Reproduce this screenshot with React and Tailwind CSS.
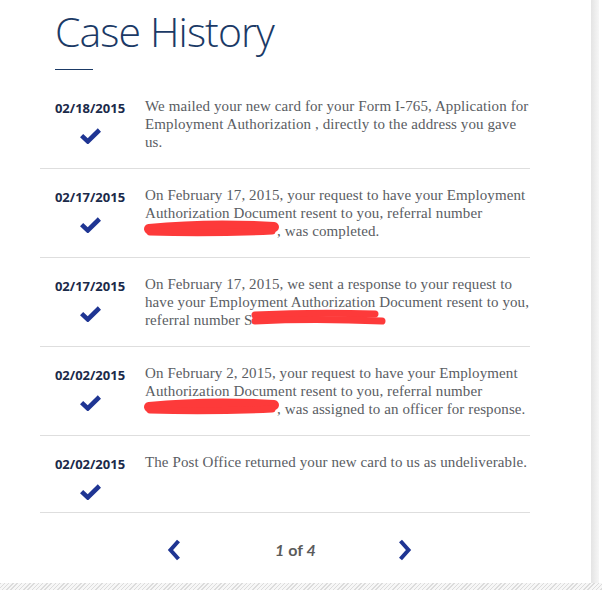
import React from "react";

const sans = { fontFamily: '"Open Sans", "Liberation Sans", sans-serif' };

function Check() {
  return (
    <svg width="21" height="17" viewBox="0 0 21 17" className="block">
      <path d="M1.6 8.6 L7.8 14.4 L19.4 3" fill="none" stroke="#1f3593" strokeWidth="4.6" strokeLinejoin="miter" strokeLinecap="butt" />
    </svg>
  );
}

function Redact({ w, second }) {
  return (
    <span className="relative inline-block align-baseline" style={{ width: w, height: 12 }}>
      <svg width={w + 8} height="22" viewBox={`0 0 ${w + 8} 22`} className="absolute left-[-3px] top-[-4px]">
        {second ? (
          <>
            <path d={`M6 6 Q ${w / 2} 3 ${w - 4} 5`} stroke="#fd3a3a" strokeWidth="7" strokeLinecap="round" fill="none" />
            <path d={`M6 12 Q ${w / 2} 9 ${w + 3} 12`} stroke="#fd3a3a" strokeWidth="7" strokeLinecap="round" fill="none" />
          </>
        ) : (
          <>
            <path d={`M7 9 Q ${w / 2} 3 ${w} 7`} stroke="#fd3a3a" strokeWidth="10" strokeLinecap="round" fill="none" />
            <path d={`M8 12 Q ${w / 2} 14 ${w - 2} 11`} stroke="#fd3a3a" strokeWidth="7" strokeLinecap="round" fill="none" />
          </>
        )}
      </svg>
    </span>
  );
}

function Row({ date, children }) {
  return (
    <div className="flex border-b border-[#dedede] pt-[19px] pb-[12px]">
      <div className="w-[100px] flex flex-col items-center shrink-0">
        <div className="text-[13px] leading-[18px] font-bold text-[#1b2a4a]" style={sans}>{date}</div>
        <div className="mt-[10px]"><Check /></div>
      </div>
      <div
        className="ml-[5px] -mt-[2px] mb-[5px] text-[15px] leading-[18px] tracking-[0.1px] text-[#5a5d63] whitespace-nowrap"
        style={{ fontFamily: '"Liberation Serif", serif' }}
      >
        {children}
      </div>
    </div>
  );
}

export default function App() {
  return (
    <div className="w-[602px] h-[590px] bg-white flex flex-col overflow-hidden">
      <div className="flex flex-1">
        <div className="w-[591px] pl-[40px] pt-[7px]">
          <div className="pl-[15px]">
            <h1 className="text-[41px] leading-[48px] font-light tracking-[-0.9px] text-[#1b3a66]" style={sans}>Case History</h1>
            <div className="w-[38px] h-[1px] bg-[#1b3a66] mt-[14px]" />
          </div>
          <div className="w-[490px] mt-[10px]">
            <Row date="02/18/2015">
              We mailed your new card for your Form I-765, Application for<br />
              Employment Authorization , directly to the address you gave<br />
              us.
            </Row>
            <Row date="02/17/2015">
              On February 17, 2015, your request to have your Employment<br />
              Authorization Document resent to you, referral number<br />
              <Redact w={132} />, was completed.
            </Row>
            <Row date="02/17/2015">
              On February 17, 2015, we sent a response to your request to<br />
              have your Employment Authorization Document resent to you,<br />
              referral number S<Redact w={130} second />
            </Row>
            <Row date="02/02/2015">
              On February 2, 2015, your request to have your Employment<br />
              Authorization Document resent to you, referral number<br />
              <Redact w={132} />, was assigned to an officer for response.
            </Row>
            <Row date="02/02/2015">
              The Post Office returned your new card to us as undeliverable.
            </Row>
          </div>
          <div className="flex items-center pt-[26px] pl-[127px]">
            <svg width="14" height="22" viewBox="0 0 14 22" className="block">
              <path d="M11.5 2 L3.5 11 L11.5 20" fill="none" stroke="#1f3593" strokeWidth="4" />
            </svg>
            <div
              className="ml-[94px] w-[38px] text-center whitespace-nowrap text-[16px] leading-[22px] font-bold text-[#5b5b5b]"
              style={{ fontFamily: 'Lato, "Open Sans", sans-serif' }}
            >
              <span className="italic">1</span> of <span className="italic">4</span>
            </div>
            <svg width="14" height="22" viewBox="0 0 14 22" className="block ml-[85px]">
              <path d="M2.5 2 L10.5 11 L2.5 20" fill="none" stroke="#1f3593" strokeWidth="4" />
            </svg>
          </div>
        </div>
        <div className="w-[8px] bg-gradient-to-r from-[#e4e4e4] to-[#f6f6f6]" />
        <div className="w-[3px] bg-white" />
      </div>
      <div className="h-[7px] bg-[repeating-linear-gradient(135deg,#dcdcdc_0px,#dcdcdc_1px,#f7f7f7_1px,#f7f7f7_3px)]" />
    </div>
  );
}
